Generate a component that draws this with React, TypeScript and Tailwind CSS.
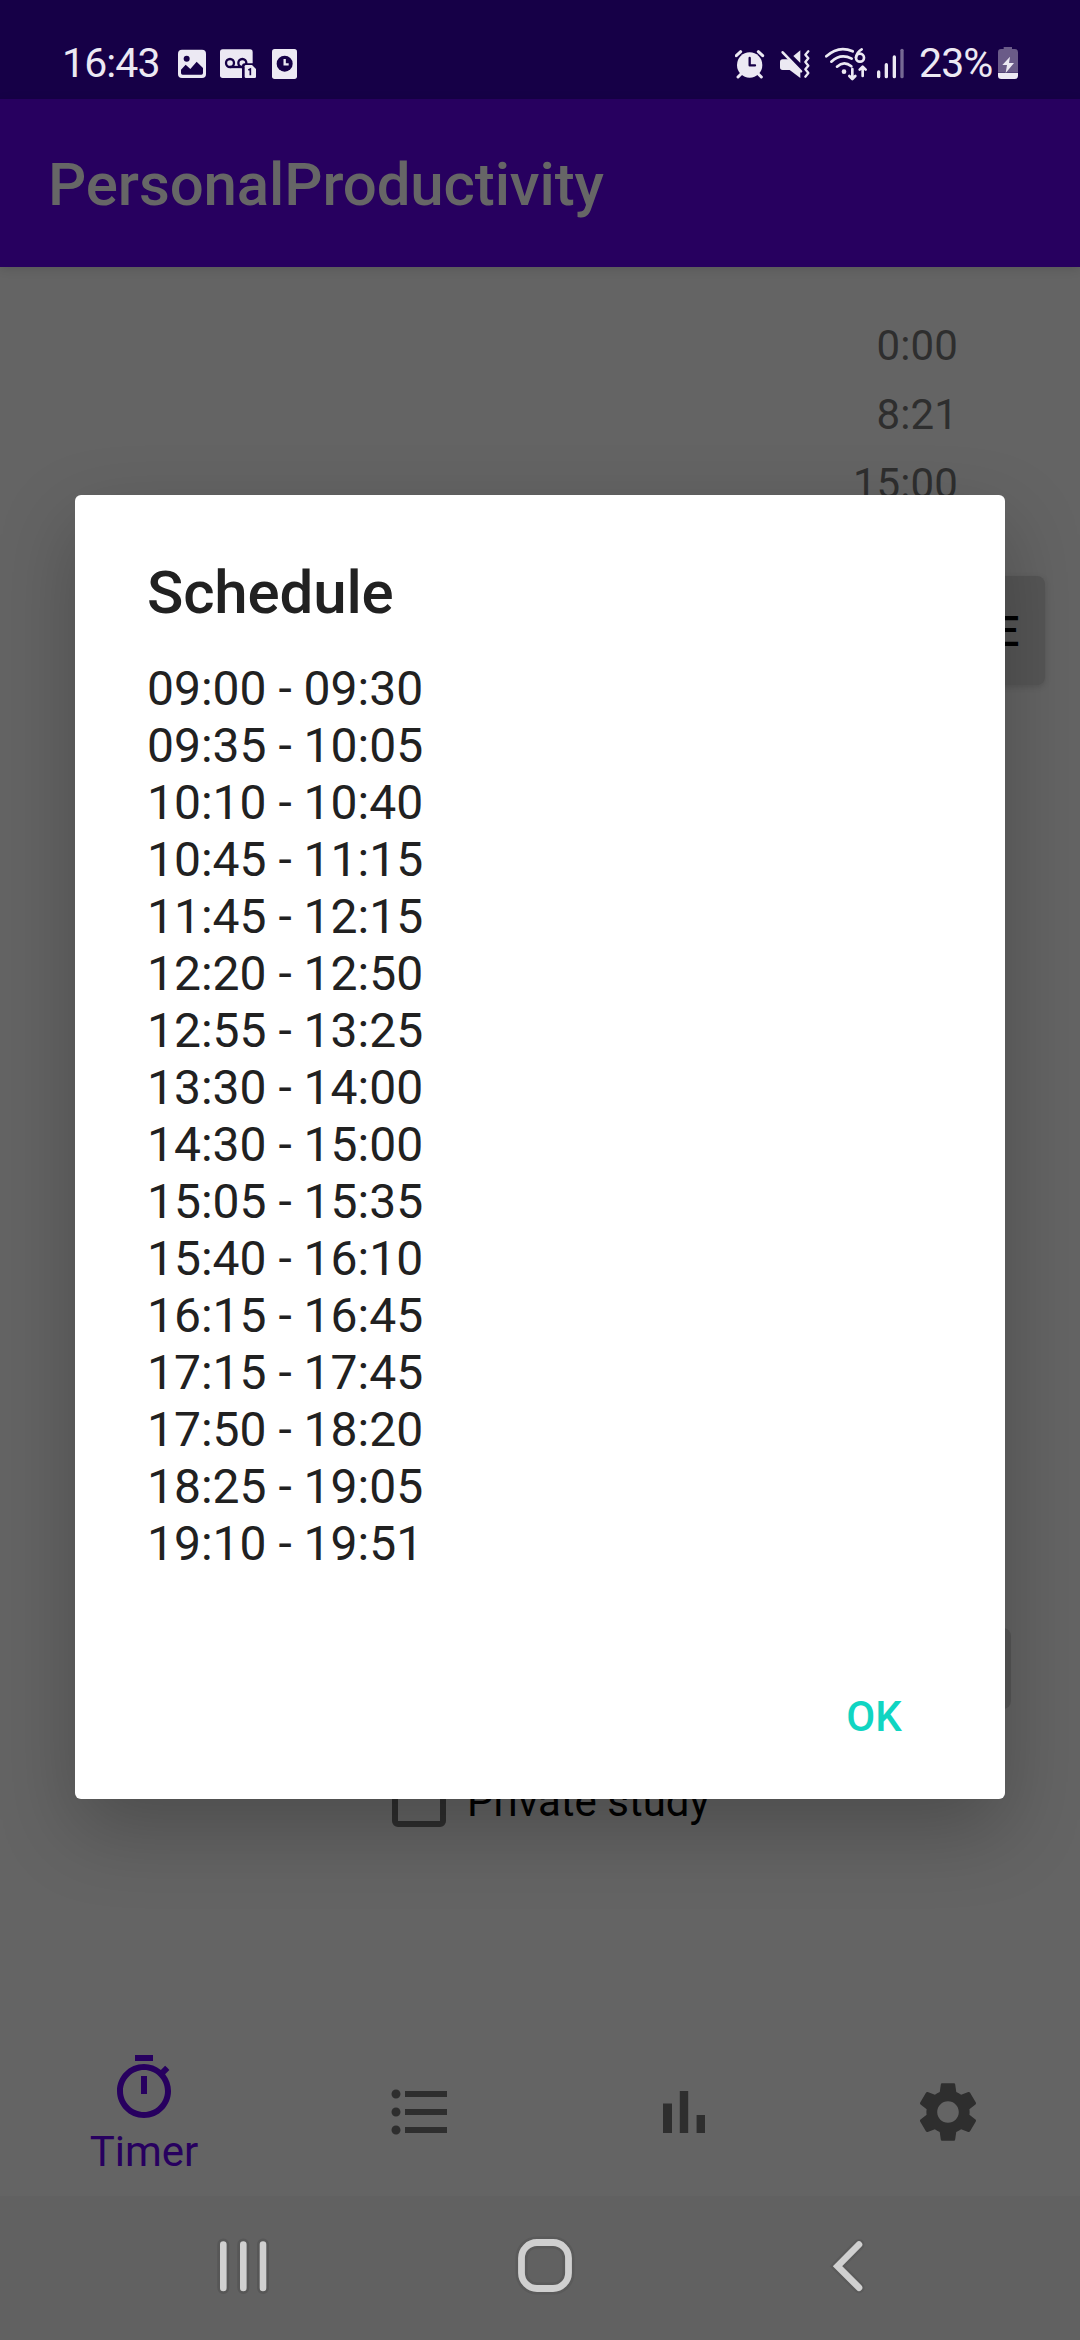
import React from "react";

const slots = [
  "09:00 - 09:30", "09:35 - 10:05", "10:10 - 10:40", "10:45 - 11:15",
  "11:45 - 12:15", "12:20 - 12:50", "12:55 - 13:25", "13:30 - 14:00",
  "14:30 - 15:00", "15:05 - 15:35", "15:40 - 16:10", "16:15 - 16:45",
  "17:15 - 17:45", "17:50 - 18:20", "18:25 - 19:05", "19:10 - 19:51",
];

const INK = "#ece9f3";
const BAR = "#160047";

function StatusBar() {
  return (
    <div className="flex h-[99px] shrink-0 items-start bg-[#160047] pt-[45px] text-[#ece9f3]">
      <span className="ml-[62px] w-[116px] whitespace-nowrap text-[41px] leading-[40px] tracking-[-0.9px] -mt-[2px]">16:43</span>
      {/* picture */}
      <svg className="h-10 w-7" viewBox="414 45 84 120">
        <rect x="414" y="59" width="84" height="85" rx="12" fill={INK} />
        <circle cx="440" cy="86" r="9" fill={BAR} />
        <path d="M423 119 L437 104 L451 117 L470 95 L489 114 V129 Q489 134 484 134 H428 Q423 134 423 129Z" fill={BAR} />
      </svg>
      {/* voicemail with a SIM badge */}
      <svg className="ml-[14px] h-10 w-9" viewBox="540 45 108 120">
        <rect x="540" y="58" width="98" height="86" rx="8" fill={INK} />
        <g fill="none" stroke={BAR} strokeWidth="7">
          <circle cx="570" cy="99" r="12" />
          <circle cx="607" cy="99" r="12" />
          <path d="M570 111 H607" />
        </g>
        <path d="M606 150 V108 Q606 100 614 100 H650 V150Z" fill={BAR} />
        <path d="M614 109 Q614 105 618 105 H636 L648 117 V140 Q648 144 644 144 H618 Q614 144 614 140Z" fill={INK} />
        <path d="M625 120 L631 117 V136" fill="none" stroke={BAR} strokeWidth="5" />
      </svg>
      {/* clock card */}
      <svg className="ml-[15px] h-10 w-[27px]" viewBox="692 45 81 120">
        <rect x="695" y="57" width="75" height="90" rx="8" fill={INK} />
        <circle cx="733" cy="101" r="24" fill={BAR} />
        <path d="M733 87 V103 H745" fill="none" stroke={INK} strokeWidth="7" />
      </svg>
      {/* alarm */}
      <svg className="ml-[437px] h-10 w-[30px]" viewBox="75 45 90 120">
        <circle cx="119" cy="105" r="38" fill={INK} />
        <path d="M79 77 L92 65 M158 77 L145 65 M93 132 L84 141 M145 132 L154 141" stroke={INK} strokeWidth="9" strokeLinecap="round" />
        <path d="M119 84 V106 H135" fill="none" stroke={BAR} strokeWidth="7" strokeLinecap="round" strokeLinejoin="round" />
      </svg>
      {/* muted speaker, vibrating */}
      <svg className="ml-[14px] h-10 w-[32px]" viewBox="207 45 96 120">
        <path d="M218 88 H234 L271 123 V144 L239 120 H218 Q210 120 210 112 V96 Q210 88 218 88Z" fill={INK} />
        <path d="M271 61 V99 L250 78Z" fill={INK} />
        <path d="M218 67 L273 124" stroke={INK} strokeWidth="8" strokeLinecap="round" />
        <path d="M295 64 L286 74 L295 85 L286 96 L295 107 L286 118 L295 129 L286 140" fill="none" stroke={INK} strokeWidth="7" strokeLinecap="round" strokeLinejoin="round" />
      </svg>
      {/* wifi 6 with traffic arrows */}
      <svg className="ml-[12px] h-10 w-[46px]" viewBox="339 45 138 120">
        <g fill="none" stroke={INK} strokeWidth="8" strokeLinecap="round" strokeLinejoin="round">
          <path d="M349 79 Q386 45 428 64" />
          <path d="M364 95 Q392 69 425 86" />
          <path d="M381 110 Q402 91 424 109" />
          <path d="M427 117 V145 M418 138 L427 147 L436 138" />
          <path d="M458 138 V111 M449 119 L458 110 L467 119" />
          <circle cx="450" cy="83" r="12" />
          <path d="M438 82 Q441 66 455 58" />
        </g>
        <circle cx="402" cy="125" r="7" fill={INK} />
      </svg>
      {/* signal strength */}
      <svg className="ml-[7px] h-10 w-[30px]" viewBox="498 45 90 120">
        <g strokeWidth="10" strokeLinecap="round" stroke={INK}>
          <path d="M506 126 V140 M529 104 V140 M553 81 V140" />
          <path d="M576 61 V140" opacity=".45" />
        </g>
      </svg>
      <span className="ml-[13px] -mt-[2px] w-[79px] whitespace-nowrap text-[41px] leading-[40px] tracking-[-0.9px]">23%</span>
      {/* battery */}
      <svg className="-mt-[1px] h-10 w-5" viewBox="864 42 60 120">
        <path d="M881 51 H906 V57 H914 Q924 57 924 67 V128 H864 V67 Q864 57 873 57 H881Z" fill="#6a5b88" />
        <path d="M864 129 H924 V138 Q924 147 914 147 H874 Q864 147 864 138Z" fill={INK} />
        <path d="M900 80 L877 105 H891 L887 129 L912 99 H897Z" fill={INK} />
      </svg>
    </div>
  );
}

function BottomNav() {
  return (
    <div className="flex h-[168px] shrink-0 bg-[#646464] text-[#2e2e2e]">
      <div className="flex w-72 flex-col items-center pt-6 text-[#27005f]">
        <svg className="size-[72px]" viewBox="0 0 24 24" fill="currentColor">
          <path d="M15 1H9v2h6V1zm-4 13h2V8h-2v6zm8.03-6.61 1.42-1.42c-.43-.51-.9-.99-1.41-1.41l-1.42 1.42C16.07 4.74 14.12 4 12 4c-4.97 0-9 4.03-9 9s4.02 9 9 9 9-4.03 9-9c0-2.12-.74-4.07-1.97-5.61zM12 20c-3.87 0-7-3.13-7-7s3.13-7 7-7 7 3.13 7 7-3.13 7-7 7z" />
        </svg>
        <span className="mt-[3px] text-[42px] leading-[49px]">Timer</span>
      </div>
      <div className="grid flex-1 grid-cols-3 place-items-center">
        <svg className="size-[72px]" viewBox="0 0 24 24" fill="currentColor">
          <path d="M4 10.5c-.83 0-1.5.67-1.5 1.5s.67 1.5 1.5 1.5 1.5-.67 1.5-1.5-.67-1.5-1.5-1.5zm0-6c-.83 0-1.5.67-1.5 1.5S3.17 7.5 4 7.5 5.5 6.83 5.5 6 4.83 4.5 4 4.5zm0 12c-.83 0-1.5.68-1.5 1.5s.68 1.5 1.5 1.5 1.5-.68 1.5-1.5-.67-1.5-1.5-1.5zM7 19h14v-2H7v2zm0-6h14v-2H7v2zm0-8v2h14V5H7z" />
        </svg>
        <svg className="size-[72px]" viewBox="0 0 24 24" fill="currentColor">
          <path d="M5 9.2h3V19H5zM10.6 5h2.8v14h-2.8zm5.6 8H19v6h-2.8z" />
        </svg>
        <svg className="size-[72px]" viewBox="0 0 24 24" fill="currentColor">
          <path d="M19.14 12.94c.04-.3.06-.61.06-.94 0-.32-.02-.64-.07-.94l2.03-1.58c.18-.14.23-.41.12-.61l-1.92-3.32c-.12-.22-.37-.29-.59-.22l-2.39.96c-.5-.38-1.03-.7-1.62-.94l-.36-2.54c-.04-.24-.24-.41-.48-.41h-3.84c-.24 0-.43.17-.47.41l-.36 2.54c-.59.24-1.13.57-1.62.94l-2.39-.96c-.22-.08-.47 0-.59.22L2.74 8.87c-.12.21-.08.47.12.61l2.03 1.58c-.05.3-.09.63-.09.94s.02.64.07.94l-2.03 1.58c-.18.14-.23.41-.12.61l1.92 3.32c.12.22.37.29.59.22l2.39-.96c.5.38 1.03.7 1.62.94l.36 2.54c.05.24.24.41.48.41h3.84c.24 0 .44-.17.47-.41l.36-2.54c.59-.24 1.13-.56 1.62-.94l2.39.96c.22.08.47 0 .59-.22l1.92-3.32c.12-.22.07-.47-.12-.61l-2.01-1.58zM12 15.6c-1.98 0-3.6-1.62-3.6-3.6s1.62-3.6 3.6-3.6 3.6 1.62 3.6 3.6-1.62 3.6-3.6 3.6z" />
        </svg>
      </div>
    </div>
  );
}

function SystemNav() {
  return (
    <div className="flex h-36 shrink-0 items-center bg-[#616161] pb-1">
      <svg className="ml-[213px] h-[60px] w-[60px]" viewBox="0 0 60 60" fill="none" strokeLinecap="round">
        <path d="M10.3 8.5V52M30.3 8.5V52M50 8.5V52" stroke="#575757" strokeWidth="12" />
        <path d="M10.3 8.5V52M30.3 8.5V52M50 8.5V52" stroke="#d0d0d0" strokeWidth="6.6" />
      </svg>
      <svg className="ml-[242px] h-[60px] w-[60px]" viewBox="0 0 60 60" fill="none">
        <rect x="6.5" y="6.5" width="47" height="46" rx="15.5" stroke="#5a5a5a" strokeWidth="12" />
        <rect x="6.5" y="6.5" width="47" height="46" rx="15.5" stroke="#d0d0d0" strokeWidth="6.8" />
      </svg>
      <svg className="ml-[242px] h-[60px] w-[60px]" viewBox="0 0 60 60" fill="none" strokeLinecap="round" strokeLinejoin="miter">
        <path d="M42 8.5L20.5 30.2L42 51.7" stroke="#5a5a5a" strokeWidth="11" />
        <path d="M42 8.5L20.5 30.2L42 51.7" stroke="#d0d0d0" strokeWidth="6.6" />
      </svg>
    </div>
  );
}

export default function App() {
  return (
    <div className="relative flex h-[2340px] w-[1080px] flex-col overflow-hidden bg-[#646464] font-[Roboto,sans-serif]">
      <StatusBar />
      <header className="flex h-[168px] shrink-0 items-center bg-[#27005f] pl-12 pt-[4px] shadow-[0_2px_10px_rgba(0,0,0,0.12)]">
        <h1 className="text-[60px] font-medium leading-[70px] tracking-[-0.12px] text-[#666666]">PersonalProductivity</h1>
      </header>

      <main className="flex flex-1 flex-col pt-[44px]">
        <div className="pr-[122px] text-right text-[42px] leading-[69px] tracking-[0.1px] text-[#2e2e2e]">
          <div>0:00</div>
          <div>8:21</div>
          <div>15:00</div>
        </div>
        <button className="mr-[35px] mt-[58px] flex h-[109px] w-[270px] items-center justify-end self-end rounded-[8px] bg-[#565656] pr-[22px] pt-[2px] text-[42px] font-medium tracking-[3.75px] text-black shadow-[0_2px_6px_rgba(0,0,0,0.15)]">
          SCHEDULE
        </button>
        <div className="mr-[69px] mt-[943px] h-[81px] w-[800px] self-end rounded-[8px] bg-[#565656]" />
        <label className="ml-[392px] mt-[64px] flex h-[54px] items-center">
          <span className="size-[54px] rounded-[6px] border-[6px] border-[#2e2e2e]" />
          <span className="ml-[21px] whitespace-nowrap pt-[3px] text-[42px] leading-[49px] text-black">Private study</span>
        </label>
      </main>

      <BottomNav />
      <SystemNav />

      <div className="absolute inset-x-0 top-[495px] flex justify-center">
        <section role="dialog" className="flex h-[1304px] w-[930px] flex-col rounded-[6px] bg-white px-[72px] pt-[63px] text-[#212121] shadow-[0_30px_80px_rgba(0,0,0,0.24)]">
          <h2 className="text-[60px] font-medium leading-[70px] tracking-[-0.15px]">Schedule</h2>
          <ul className="mt-[32px] text-[48px] leading-[57px]">
            {slots.map((s) => (
              <li key={s}>{s}</li>
            ))}
          </ul>
          <button className="mr-[31px] mt-[120px] self-end text-[42px] font-medium leading-[49px] tracking-[0.2px] text-[#10d5c2]">OK</button>
        </section>
      </div>
    </div>
  );
}
